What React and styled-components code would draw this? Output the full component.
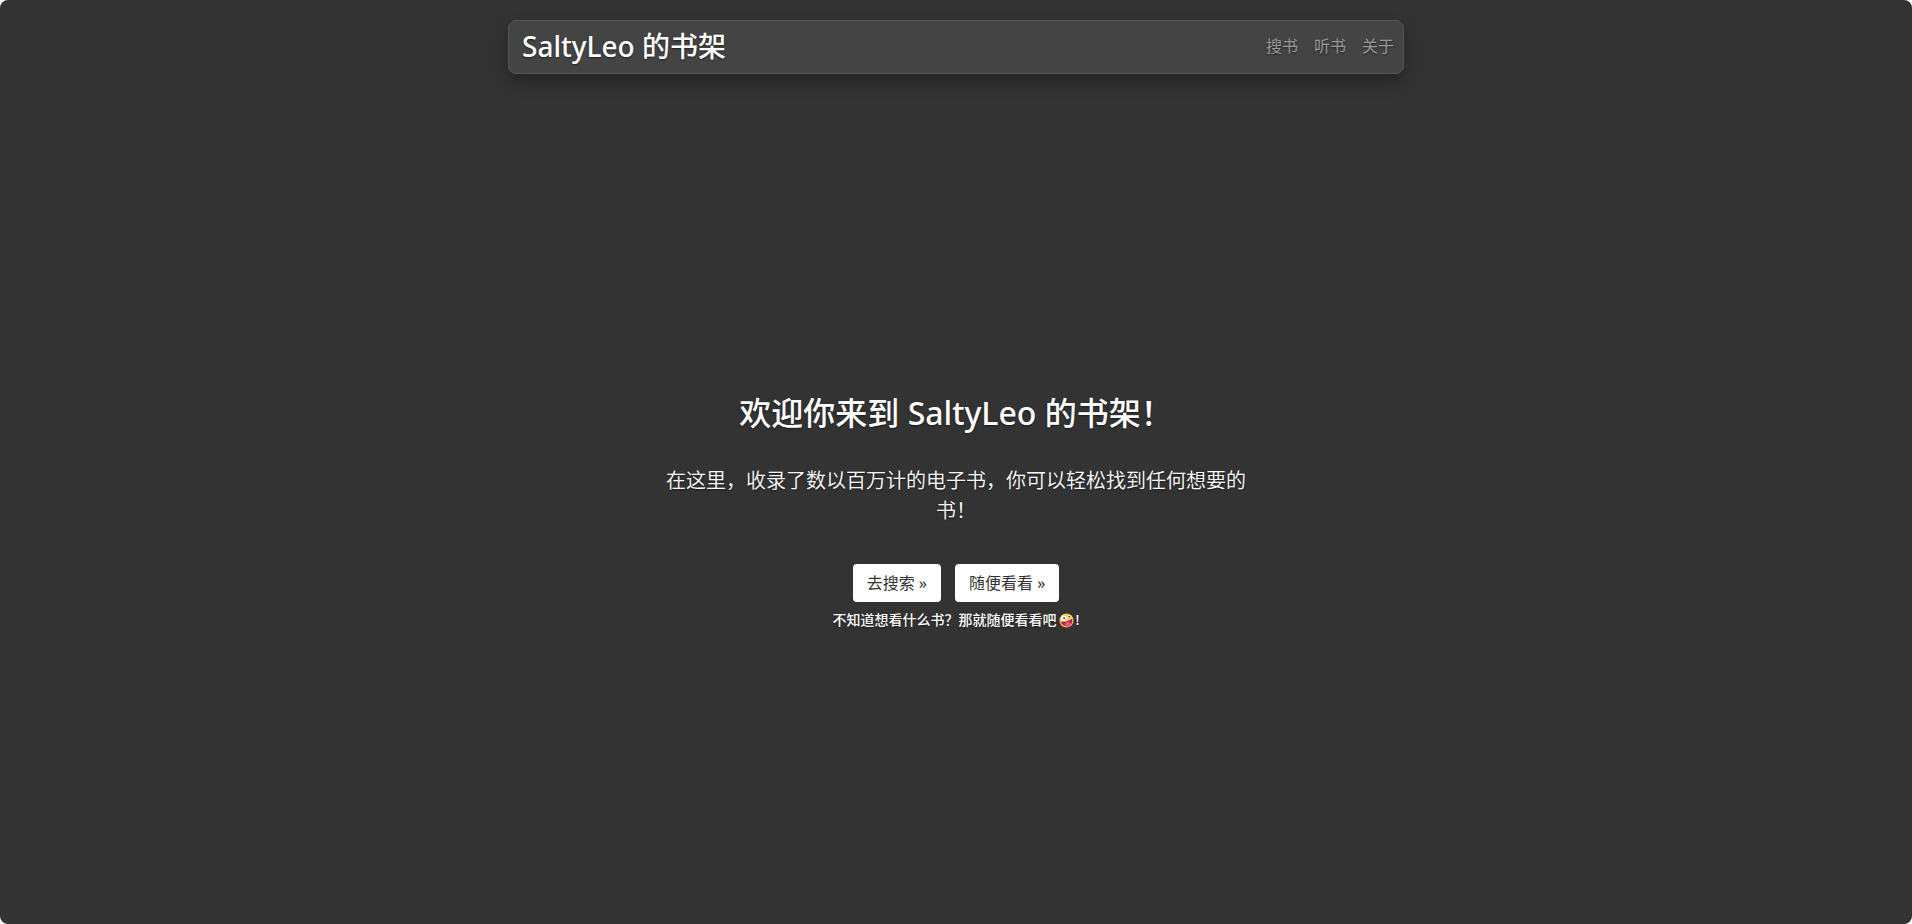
import React from 'react';
import styled, { createGlobalStyle } from 'styled-components';

const GlobalStyle = createGlobalStyle`
    *, *::before, *::after {
        box-sizing: border-box;
    }

    body {
        margin: 0;
        background-color: #fff;
        color: #fff;
        font-family: "Noto Sans", "Noto Sans CJK SC", sans-serif;
        font-size: 16px;
        line-height: 24px;
        text-shadow: 0 1px 2px rgba(0, 0, 0, 0.5);
    }
`;

const Page = styled.div`
    display: flex;
    flex-direction: column;
    align-items: center;
    min-height: 100vh;
    padding: 20px 16px;
    border-radius: 8px;
    background-color: #333;
`;

const Header = styled.header`
    display: flex;
    align-items: center;
    justify-content: space-between;
    width: 100%;
    max-width: 896px;
    min-height: 54px;
    padding: 0 9px 3px 13px;
    border: 1px solid #555;
    border-radius: 8px;
    background-color: #444;
    box-shadow: 0 8px 16px rgba(0, 0, 0, 0.3);
`;

const Brand = styled.h3`
    margin: 0;
    font-size: 28px;
    font-weight: 500;
    line-height: 34px;
`;

const Nav = styled.nav`
    display: flex;
    gap: 16px;
`;

const NavLink = styled.a`
    color: #999;
    text-decoration: none;
`;

const Main = styled.main`
    display: flex;
    flex: 1;
    flex-direction: column;
    align-items: center;
    justify-content: center;
    width: 100%;
    max-width: 592px;
    padding-top: 46px;
    text-align: center;
`;

const Title = styled.h1`
    margin: 0 0 34px;
    font-size: 32px;
    font-weight: 500;
    line-height: 38px;
`;

const Lead = styled.p`
    margin: 0 0 38px;
    font-size: 20px;
    font-weight: 350;
    line-height: 30px;
`;

const Actions = styled.div`
    display: flex;
    gap: 14px;
    margin-bottom: 8px;
`;

const Button = styled.button`
    height: 38px;
    padding: 0 14px;
    border: 0;
    border-radius: 4px;
    background-color: #fff;
    color: #333;
    font-family: inherit;
    font-size: 16px;
    line-height: 24px;
    text-shadow: none;
    cursor: pointer;
`;

const Hint = styled.small`
    font-size: 14px;
    font-weight: 500;
    line-height: 20px;
`;

const Emoji = styled.svg`
    width: 15px;
    height: 15px;
    margin: 0 2px;
    vertical-align: -3px;
`;

const links = ['搜书', '听书', '关于'];

const ZanyFace = () => (
    <Emoji viewBox="0 0 32 32" role="img" aria-label="鬼脸">
        <circle cx="16" cy="16" r="15" fill="#ffc83d" />
        <path d="M4 18 C12 20 21 17 28 12 C30 21 25 28 17 28 C10 28 5 24 4 18Z" fill="#bb1d55" />
        <path d="M13 23 C16 18 22 18 24 21 L25 26 C23 30 16 31 14 27Z" fill="#f9518a" />
        <circle cx="10" cy="11" r="6" fill="#fff" />
        <circle cx="11" cy="11" r="2" fill="#402a32" />
        <circle cx="22" cy="8" r="4" fill="#fff" />
        <circle cx="22" cy="8" r="2" fill="#402a32" />
    </Emoji>
);

const App = () => {
    return (
        <>
            <GlobalStyle />
            <Page lang="zh-CN">
                <Header>
                    <Brand>SaltyLeo 的书架</Brand>
                    <Nav>
                        {links.map((link) => (
                            <NavLink key={link} href="#">{link}</NavLink>
                        ))}
                    </Nav>
                </Header>
                <Main>
                    <Title>欢迎你来到 SaltyLeo 的书架！</Title>
                    <Lead>在这里，收录了数以百万计的电子书，你可以轻松找到任何想要的书！</Lead>
                    <Actions>
                        <Button type="button">去搜索 »</Button>
                        <Button type="button">随便看看 »</Button>
                    </Actions>
                    <Hint>不知道想看什么书？那就随便看看吧<ZanyFace />!</Hint>
                </Main>
            </Page>
        </>
    );
};

export default App;
